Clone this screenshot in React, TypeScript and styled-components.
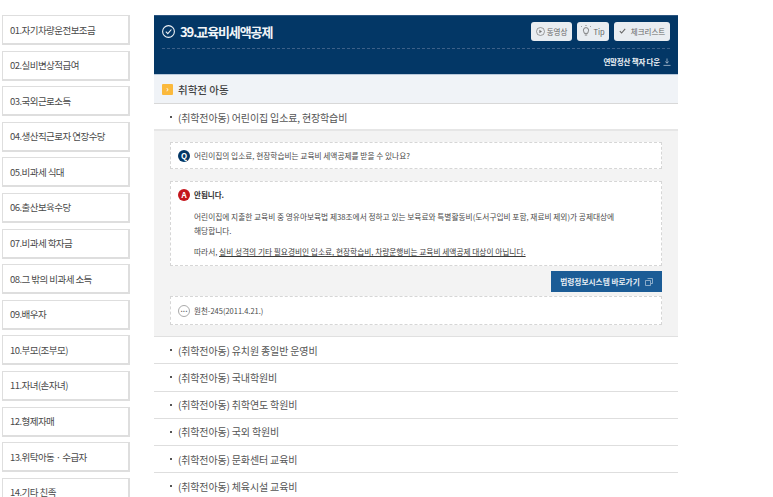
import React, { ReactElement } from "react"
import styled, { createGlobalStyle } from "styled-components"

const sideItems = [
  "01.자기차량운전보조금",
  "02.실비변상적급여",
  "03.국외근로소득",
  "04.생산직근로자 연장수당",
  "05.비과세 식대",
  "06.출산보육수당",
  "07.비과세 학자금",
  "08.그 밖의 비과세 소득",
  "09.배우자",
  "10.부모(조부모)",
  "11.자녀(손자녀)",
  "12.형제자매",
  "13.위탁아동 · 수급자",
  "14.기타 친족",
]

const restRows = [
  "(취학전아동) 유치원 종일반 운영비",
  "(취학전아동) 국내학원비",
  "(취학전아동) 취학연도 학원비",
  "(취학전아동) 국외 학원비",
  "(취학전아동) 문화센터 교육비",
  "(취학전아동) 체육시설 교육비",
]

const GlobalStyle = createGlobalStyle`
  html, body {
    margin: 0;
    padding: 0;
    height: 497px;
    overflow: hidden;
    background: #fff;
    font-family: "Noto Sans CJK KR", "Noto Sans", sans-serif;
  }
`

const Page = styled.div`
  display: flex;
  align-items: flex-start;
  width: 773px;
  height: 497px;
  overflow: hidden;
  padding: 15px 0 0 2px;
  box-sizing: border-box;
`

const Side = styled.ul`
  list-style: none;
  margin: 0;
  padding: 0;
  width: 128px;
  flex: none;
  display: flex;
  flex-direction: column;
  gap: 5.6px;
`

const SideItem = styled.li`
  box-sizing: border-box;
  height: 30px;
  flex: none;
  border: 1px solid #dedede;
  border-bottom-width: 2px;
  border-right-width: 2px;
  background: #fff;
  display: flex;
  align-items: center;
  padding: 0 0 0 7px;
  font-size: 9.5px;
  letter-spacing: -0.55px;
  color: #4a4a4a;
`

const Main = styled.div`
  width: 524px;
  margin-left: 24px;
  flex: none;
`

const Header = styled.header`
  box-sizing: border-box;
  height: 60px;
  background: #033766;
  border-top: 1px solid #2c5580;
  border-bottom: 1px solid #b8c8da;
  padding: 0 8px 0 8px;
  display: flex;
  flex-direction: column;
`

const HeaderTop = styled.div`
  box-sizing: border-box;
  height: 33px;
  padding-bottom: 2px;
  flex: none;
  display: flex;
  align-items: center;
  justify-content: space-between;
  border-bottom: 1px dashed #3d6088;
`

const Title = styled.h1`
  margin: 0;
  display: flex;
  align-items: center;
  gap: 5px;
  font-size: 13px;
  font-weight: 700;
  letter-spacing: -1.1px;
  color: #f2f5f8;
`

const HeaderButtons = styled.div`
  display: flex;
  gap: 5px;
`

const HeaderButton = styled.div<{ $w: number }>`
  box-sizing: border-box;
  width: ${(p) => p.$w}px;
  height: 19px;
  border-radius: 3px;
  background: #e9edf1;
  display: flex;
  align-items: center;
  justify-content: center;
  gap: 2px;
  font-size: 7.5px;
  color: #666;
`

const Download = styled.div`
  flex: 1;
  display: flex;
  align-items: center;
  justify-content: flex-end;
  gap: 3px;
  font-size: 7.5px;
  font-weight: 700;
  letter-spacing: -0.2px;
  color: #eef2f6;
  svg {
    margin-right: -1px;
  }
`

const SectionBar = styled.div`
  box-sizing: border-box;
  height: 29px;
  background: #f0f3f7;
  border-bottom: 1px solid #d8d8d8;
  padding-left: 8px;
  display: flex;
  align-items: center;
  gap: 5px;
  font-size: 10.5px;
  font-weight: 500;
  color: #444;
`

const Badge = styled.span`
  width: 11px;
  height: 11px;
  border-radius: 1px;
  background: #fbb93c;
  color: #fff;
  font-size: 8px;
  line-height: 10px;
  text-align: center;
`

const Row = styled.div<{ $thick?: boolean }>`
  box-sizing: border-box;
  height: 27.2px;
  flex: none;
  padding-left: 16px;
  padding-top: ${(p) => (p.$thick ? "1px" : "0")};
  display: flex;
  align-items: center;
  gap: 6px;
  font-size: 10px;
  letter-spacing: -0.15px;
  color: #555;
  border-bottom: ${(p) => (p.$thick ? "2px solid #e6e6e6" : "1px solid #dedede")};
  &::before {
    content: "";
    width: 2px;
    height: 2px;
    background: #555;
  }
`

const Panel = styled.div`
  box-sizing: border-box;
  height: 206px;
  background: #f3f3f3;
  border-bottom: 1px solid #e0e0e0;
  padding: 11px 16px 0 16px;
  display: flex;
  flex-direction: column;
`

const DashedBox = styled.div`
  box-sizing: border-box;
  background: #fff;
  border: 1px dashed #d6d6d6;
`

const QuestionBox = styled(DashedBox)`
  height: 27px;
  margin-bottom: 1px;
  display: flex;
  align-items: center;
  gap: 4px;
  padding-left: 7px;
  font-size: 7.7px;
  color: #4a4a4a;
`

const Circle = styled.span<{ $bg: string }>`
  width: 12px;
  height: 12px;
  border-radius: 50%;
  background: ${(p) => p.$bg};
  color: #fff;
  font-size: 8px;
  font-weight: 700;
  display: flex;
  align-items: center;
  justify-content: center;
  flex: none;
`

const AnswerBox = styled(DashedBox)`
  margin-top: 11px;
  height: 85px;
  padding: 0 7px;
`

const AnswerHead = styled.div`
  height: 25px;
  display: flex;
  align-items: center;
  gap: 4px;
  font-size: 7.5px;
  font-weight: 700;
  color: #333;
`

const AnswerText = styled.p`
  margin: 0 0 0 16px;
  font-size: 7.7px;
  line-height: 14px;
  color: #4a4a4a;
  padding-top: 3px;
  & + & {
    padding-top: 7px;
  }
  u {
    color: #3a3a3a;
  }
`

const LinkRow = styled.div`
  display: flex;
  justify-content: flex-end;
  margin-top: 5px;
`

const LinkButton = styled.div`
  width: 111px;
  height: 21px;
  background: #1b5c96;
  color: #e8eef4;
  font-size: 7.7px;
  font-weight: 700;
  display: flex;
  align-items: center;
  justify-content: center;
  gap: 5px;
`

const SourceBox = styled(DashedBox)`
  margin-top: 4px;
  height: 29px;
  display: flex;
  align-items: center;
  gap: 4px;
  padding-left: 7px;
  font-size: 7.5px;
  color: #4a4a4a;
`

const Dots = styled.span`
  box-sizing: border-box;
  width: 12px;
  height: 12px;
  border-radius: 50%;
  border: 1px solid #aaa;
  background: #fff;
  color: #555;
  font-size: 7px;
  font-weight: 700;
  line-height: 7px;
  text-align: center;
`

function App(): ReactElement {
  return (
    <Page>
      <GlobalStyle />
      <Side>
        {sideItems.map((s) => (
          <SideItem key={s}>{s}</SideItem>
        ))}
      </Side>
      <Main>
        <Header>
          <HeaderTop>
            <Title>
              <svg width="13" height="13" viewBox="0 0 13 13" fill="none" stroke="#eef2f6" strokeWidth="1.1">
                <circle cx="6.5" cy="6.5" r="5.9" />
                <path d="M3.8 6.7l2 2 3.6-4.2" />
              </svg>
              39.교육비세액공제
            </Title>
            <HeaderButtons>
              <HeaderButton $w={41}>
                <svg width="9" height="9" viewBox="0 0 9 9" fill="none" stroke="#777" strokeWidth="0.7">
                  <circle cx="4.5" cy="4.5" r="4" />
                  <path d="M3.4 2.8l2.6 1.7-2.6 1.7z" fill="#777" stroke="none" />
                </svg>
                동영상
              </HeaderButton>
              <HeaderButton $w={32}>
                <svg width="10" height="12" viewBox="0 0 10 12" fill="none" stroke="#666" strokeWidth="0.8">
                  <path d="M3.4 8.4C3.2 7 2.4 6.6 2.4 5.2a2.6 2.6 0 0 1 5.2 0c0 1.4-.8 1.8-1 3.2z" />
                  <path d="M3.8 10h2.4M5 1V0M1 2L.3 1.3M9 2l.7-.7" />
                </svg>
                Tip
              </HeaderButton>
              <HeaderButton $w={56}>
                <svg width="7" height="6" viewBox="0 0 7 6" fill="none" stroke="#666" strokeWidth="1.1" style={{ marginRight: 3 }}>
                  <path d="M.8 3.2l1.8 1.8L6.2.8" />
                </svg>
                체크리스트
              </HeaderButton>
            </HeaderButtons>
          </HeaderTop>
          <Download>
            연말정산 책자 다운
            <svg width="8" height="8" viewBox="0 0 8 8" fill="none" stroke="#c5d2df" strokeWidth="0.7">
              <path d="M4 .5v4.6M2.3 3.6L4 5.2l1.7-1.6M.5 7.4h7" />
            </svg>
          </Download>
        </Header>
        <SectionBar>
          <Badge>›</Badge>
          취학전 아동
        </SectionBar>
        <Row $thick>(취학전아동) 어린이집 입소료, 현장학습비</Row>
        <Panel>
          <QuestionBox>
            <Circle $bg="#033766">Q</Circle>
            어린이집의 입소료, 현장학습비는 교육비 세액공제를 받을 수 있나요?
          </QuestionBox>
          <AnswerBox>
            <AnswerHead>
              <Circle $bg="#c4161c">A</Circle>
              안됩니다.
            </AnswerHead>
            <AnswerText>
              어린이집에 지출한 교육비 중 영유아보육법 제38조에서 정하고 있는 보육료와 특별활동비(도서구입비 포함, 재료비 제외)가 공제대상에
              <br />
              해당합니다.
            </AnswerText>
            <AnswerText>
              따라서, <u>실비 성격의 기타 필요경비인 입소료, 현장학습비, 차량운행비는 교육비 세액공제 대상이 아닙니다.</u>
            </AnswerText>
          </AnswerBox>
          <LinkRow>
            <LinkButton>
              법령정보시스템 바로가기
              <svg width="8" height="8" viewBox="0 0 8 8" fill="none" stroke="#b9cde0" strokeWidth="0.7">
                <path d="M2.5.5h5v5h-1.5M.5 2.5h5v5h-5z" />
              </svg>
            </LinkButton>
          </LinkRow>
          <SourceBox>
            <Dots>...</Dots>
            원천-245(2011.4.21.)
          </SourceBox>
        </Panel>
        {restRows.map((r) => (
          <Row key={r}>{r}</Row>
        ))}
      </Main>
    </Page>
  )
}

export default App
